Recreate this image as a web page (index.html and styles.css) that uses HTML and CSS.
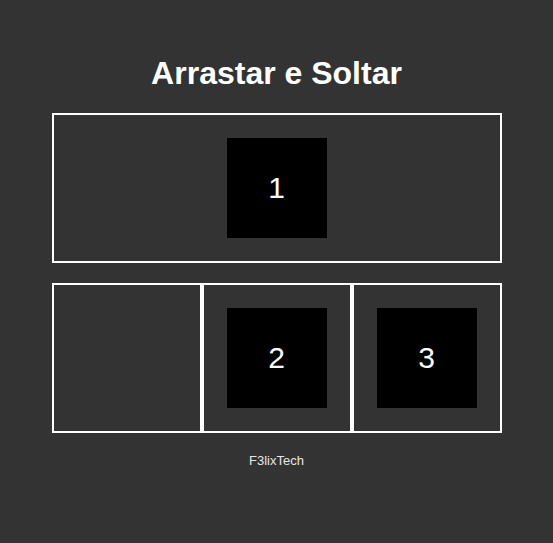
FILE: index.html
```html
<!DOCTYPE html>
<html lang="pt">
<head>
<meta charset="utf-8">
<title>Arrastar e Soltar</title>
<link rel="stylesheet" href="styles.css">
</head>
<body>
<main class="page">
  <h1 class="title">Arrastar e Soltar</h1>
  <section class="zone zone-top">
    <div class="item">1</div>
  </section>
  <section class="row">
    <div class="zone zone-cell"></div>
    <div class="zone zone-cell"><div class="item">2</div></div>
    <div class="zone zone-cell"><div class="item">3</div></div>
  </section>
  <footer class="footer">F3lixTech</footer>
</main>
</body>
</html>
```

FILE: styles.css
```css
html, body {
  margin: 0;
  padding: 0;
}
body {
  background: #333333;
  color: #ffffff;
  font-family: "Liberation Sans", Arial, sans-serif;
  min-height: 543px;
}
.page {
  display: flex;
  flex-direction: column;
  align-items: center;
  padding-top: 55px;
}
.title {
  margin: 0 0 21px 0;
  font-size: 32px;
  line-height: 37px;
  font-weight: bold;
  transform: translateX(0px);
}
.zone {
  border: 2px solid #ffffff;
  display: flex;
  align-items: center;
  justify-content: center;
}
.zone-top {
  width: 446px;
  height: 146px;
}
.row {
  display: flex;
  margin-top: 20px;
}
.zone-cell {
  width: 146px;
  height: 146px;
}
.item {
  width: 100px;
  height: 100px;
  background: #000000;
  color: #ffffff;
  font-size: 30px;
  display: flex;
  align-items: center;
  justify-content: center;
}
.footer {
  margin-top: 20px;
  font-size: 13px;
  line-height: 15px;
  color: #e6e6e6;
}
```
